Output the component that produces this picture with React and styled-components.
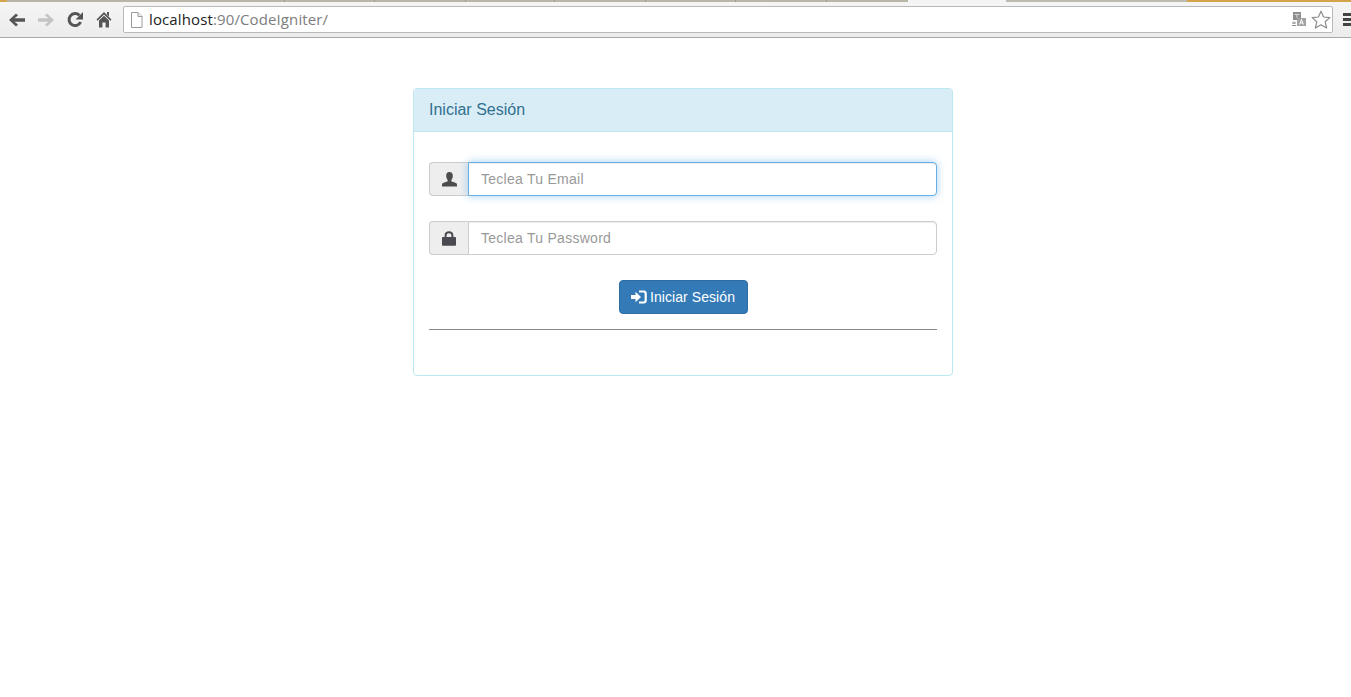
import React from "react";
import styled, { createGlobalStyle } from "styled-components";

const GlobalStyle = createGlobalStyle`
  html, body {
    margin: 0;
    padding: 0;
    background: #fff;
    font-family: "Liberation Sans", Arial, sans-serif;
  }
  * { box-sizing: border-box; }
`;

const Page = styled.div`
  width: 1351px;
  height: 697px;
  overflow: hidden;
  background: #fff;
`;

const TabStrip = styled.div`
  display: flex;
  height: 2px;
  background: #f2f2f2;
`;

const TabPiece = styled.div`
  width: ${(p) => p.$w}px;
  flex: none;
  background: ${(p) => p.$bg};
  border-right: ${(p) => (p.$sep ? "1px solid #9a9a8e" : "none")};
`;

const Toolbar = styled.div`
  display: flex;
  align-items: center;
  height: 36px;
  padding: 0 0 0 8px;
  background: linear-gradient(#f5f5f5, #ececec);
  border-bottom: 1px solid #a8a8a8;
`;

const NavButton = styled.button`
  width: 29px;
  height: 24px;
  flex: none;
  padding: 0 0 0 ${(p) => p.$inset || 0}px;
  border: 0;
  background: none;
  display: flex;
  align-items: center;
  justify-content: flex-start;
  svg { display: block; }
`;

const AddressBar = styled.div`
  display: flex;
  align-items: center;
  width: 1210px;
  height: 27px;
  margin-left: -1px;
  padding: 0 1px 0 6px;
  background: #fff;
  border: 1px solid #b9b9b9;
  border-radius: 2px;
  flex: none;
`;

const Url = styled.span`
  margin: -1px 0 0 6px;
  font-family: "Open Sans", "Liberation Sans", sans-serif;
  font-size: 15px;
  letter-spacing: 0.12px;
  color: #222;
  flex: 1;
`;

const UrlRest = styled.span`
  color: #7d7d7d;
`;

const AddressAction = styled.span`
  display: flex;
  margin-left: ${(p) => p.$gap || 0}px;
`;

const MenuButton = styled.div`
  margin-left: 10px;
  display: grid;
  gap: 2px;
  width: 10px;
  flex: none;
  span {
    height: 3px;
    background: #444;
  }
`;

const Main = styled.main`
  display: flex;
  justify-content: center;
  padding-top: 50px;
`;

const Panel = styled.section`
  width: 540px;
  height: 288px;
  margin-left: 15px;
  background: #fff;
  border: 1px solid #bce8f1;
  border-radius: 4px;
`;

const PanelHeading = styled.h3`
  margin: 0;
  height: 43px;
  padding: 0 15px;
  display: flex;
  align-items: center;
  font-size: 16px;
  font-weight: 400;
  color: #31708f;
  background: #d9edf7;
  border-bottom: 1px solid #bce8f1;
  border-radius: 3px 3px 0 0;
`;

const PanelBody = styled.form`
  padding: 30px 15px 0;
  display: flex;
  flex-direction: column;
`;

const InputGroup = styled.div`
  display: flex;
  height: 34px;
  margin-bottom: 25px;
`;

const Addon = styled.span`
  width: 39px;
  flex: none;
  display: flex;
  align-items: center;
  justify-content: center;
  background: #eee;
  border: 1px solid #ccc;
  border-right: 0;
  border-radius: 4px 0 0 4px;
`;

const Field = styled.input`
  flex: 1;
  min-width: 0;
  height: 34px;
  padding: 6px 12px;
  font: 14px "Liberation Sans", Arial, sans-serif;
  letter-spacing: 0.27px;
  color: #555;
  background: #fff;
  border: 1px solid ${(p) => (p.$focused ? "#66afe9" : "#ccc")};
  border-radius: 0 4px 4px 0;
  outline: 0;
  box-shadow: ${(p) =>
    p.$focused
      ? "inset 0 1px 1px rgba(0,0,0,.075), 0 0 8px rgba(102,175,233,.6)"
      : "inset 0 1px 1px rgba(0,0,0,.075)"};
  &::placeholder { color: #999; opacity: 1; }
`;

const Submit = styled.button`
  align-self: center;
  display: flex;
  align-items: center;
  gap: 3px;
  height: 34px;
  margin-left: 1px;
  padding: 0 12px 0 11px;
  font: 14px "Liberation Sans", Arial, sans-serif;
  letter-spacing: 0.07px;
  color: #fff;
  background: #337ab7;
  border: 1px solid #2e6da4;
  border-radius: 4px;
`;

const Divider = styled.hr`
  width: 100%;
  margin: 15px 0 0;
  border: 0;
  border-top: 1px solid #8a8a8a;
`;

const BackIcon = ({ color = "#555" }) => (
  <svg width="18" height="16" viewBox="0 0 18 16">
    <path d="M1 8 L8 1.5 L10 3.5 L6.5 6.3 H17 V9.7 H6.5 L10 12.5 L8 14.5 Z" fill={color} />
  </svg>
);

const ForwardIcon = ({ color = "#c4c4c4" }) => (
  <svg width="18" height="16" viewBox="0 0 18 16">
    <path d="M17 8 L10 1.5 L8 3.5 L11.5 6.3 H1 V9.7 H11.5 L8 12.5 L10 14.5 Z" fill={color} />
  </svg>
);

const ReloadIcon = () => (
  <svg width="17" height="17" viewBox="0 0 17 17">
    <path d="M13.6 11 A6 6 0 1 1 12.4 4.4" fill="none" stroke="#555" strokeWidth="3" />
    <path d="M16 1 V8.5 H8.5 Z" fill="#555" />
  </svg>
);

const HomeIcon = () => (
  <svg width="16" height="17" viewBox="0 0 16 17">
    <path d="M8 1 L15.5 8.5 L14.3 9.7 L8 3.6 L1.7 9.7 L.5 8.5 Z M11 1 H13 V5.5 L11 3.5 Z" fill="#555" />
    <path d="M3 9.4 L8 4.8 L13 9.4 V16.5 H9.6 V11.5 H6.4 V16.5 H3 Z" fill="#555" />
  </svg>
);

const PageIcon = () => (
  <svg width="13" height="16" viewBox="0 0 13 16">
    <path d="M1.5 .5 H8 L12 4.5 V15.5 H1.5 Z" fill="#fff" stroke="#9a9a9a" />
    <path d="M8 .5 V4.5 H12" fill="#eee" stroke="#9a9a9a" />
  </svg>
);

const TranslateIcon = () => (
  <svg width="14" height="15" viewBox="0 0 14 15">
    <rect x="1" y="0" width="8" height="8" fill="#8e8e8e" />
    <rect x="2.5" y="2" width="5" height="1" fill="#d8d8d8" />
    <rect x="4.5" y="3" width="1" height="3" fill="#d8d8d8" />
    <rect x="5" y="6" width="9" height="8" fill="#a2a2a2" />
    <path d="M7.6 12.5 L9.5 7.5 L11.4 12.5 M8.3 11 H10.7" fill="none" stroke="#fff" strokeWidth="1" />
    <path d="M0 11 H4 M2 9.5 V12 M0 13.5 H4" stroke="#8e8e8e" strokeWidth="1" />
  </svg>
);

const StarIcon = () => (
  <svg width="20" height="19" viewBox="0 0 20 19">
    <path
      d="M10 1.2 L12.6 7 L18.9 7.6 L14.2 11.8 L15.6 18 L10 14.8 L4.4 18 L5.8 11.8 L1.1 7.6 L7.4 7 Z"
      fill="#fff"
      stroke="#8c8c8c"
      strokeWidth="1.2"
      strokeLinejoin="round"
    />
  </svg>
);

// glyphicon-user
const UserIcon = () => (
  <svg width="15" height="15" viewBox="0 0 15 15">
    <path
      d="M7.5 0 C9.8 0 10.8 1.7 10.8 3.8 C10.8 5.8 10.1 7.3 9.3 8.2 V9.2 L13.9 11 C14.6 11.3 15 11.8 15 12.6 V14.5 H0 V12.6 C0 11.8 .4 11.3 1.1 11 L5.7 9.2 V8.2 C4.9 7.3 4.2 5.8 4.2 3.8 C4.2 1.7 5.2 0 7.5 0 Z"
      fill="#4d4d4d"
    />
  </svg>
);

// glyphicon-lock
const LockIcon = () => (
  <svg width="14" height="15" viewBox="0 0 14 15">
    <path
      d="M2.6 6 V4.4 C2.6 1.6 4.4 .3 7 .3 C9.6 .3 11.4 1.6 11.4 4.4 V6 H13 C13.6 6 14 6.4 14 7 V13.8 C14 14.4 13.6 14.8 13 14.8 H1 C.4 14.8 0 14.4 0 13.8 V7 C0 6.4 .4 6 1 6 Z M4.6 6 H9.4 V4.4 C9.4 3 8.4 2.3 7 2.3 C5.6 2.3 4.6 3 4.6 4.4 Z"
      fill="#4a4a50"
      fillRule="evenodd"
    />
  </svg>
);

// glyphicon-log-in
const LogInIcon = () => (
  <svg width="16" height="14" viewBox="0 0 16 14">
    <path d="M0 5 H4.5 V1.8 L10 7 L4.5 12.2 V9 H0 Z" fill="#fff" />
    <path
      d="M8 .5 H13 C14.6 .5 15.8 1.7 15.8 3.3 V10.7 C15.8 12.3 14.6 13.5 13 13.5 H8 V11.4 H12.4 C13.1 11.4 13.6 10.9 13.6 10.2 V3.8 C13.6 3.1 13.1 2.6 12.4 2.6 H8 Z"
      fill="#fff"
    />
  </svg>
);

const tabPieces = [
  { w: 7, bg: "#d4a44a" },
  { w: 278, bg: "#b9b6a8", sep: true },
  { w: 90, bg: "#b9b6a8", sep: true },
  { w: 91, bg: "#b9b6a8", sep: true },
  { w: 89, bg: "#b9b6a8", sep: true },
  { w: 91, bg: "#b9b6a8", sep: true },
  { w: 90, bg: "#b9b6a8", sep: true },
  { w: 91, bg: "#b9b6a8", sep: true },
  { w: 81, bg: "#b9b6a8" },
  { w: 98, bg: "#f4f4f4" },
  { w: 181, bg: "#bdbab0" },
  { w: 164, bg: "#d4a44a" },
];

export default function App() {
  return (
    <Page>
      <GlobalStyle />
      <TabStrip>
        {tabPieces.map((t, i) => (
          <TabPiece key={i} $w={t.w} $bg={t.bg} $sep={t.sep} />
        ))}
      </TabStrip>
      <Toolbar>
        <NavButton><BackIcon /></NavButton>
        <NavButton><ForwardIcon /></NavButton>
        <NavButton $inset={1}><ReloadIcon /></NavButton>
        <NavButton $inset={1}><HomeIcon /></NavButton>
        <AddressBar>
          <PageIcon />
          <Url>
            localhost<UrlRest>:90/CodeIgniter/</UrlRest>
          </Url>
          <AddressAction><TranslateIcon /></AddressAction>
          <AddressAction $gap={5}><StarIcon /></AddressAction>
        </AddressBar>
        <MenuButton><span /><span /><span /></MenuButton>
      </Toolbar>
      <Main>
        <Panel>
          <PanelHeading>Iniciar Sesión</PanelHeading>
          <PanelBody onSubmit={(e) => e.preventDefault()}>
            <InputGroup>
              <Addon><UserIcon /></Addon>
              <Field $focused placeholder="Teclea Tu Email" />
            </InputGroup>
            <InputGroup>
              <Addon><LockIcon /></Addon>
              <Field type="password" placeholder="Teclea Tu Password" />
            </InputGroup>
            <Submit type="submit"><LogInIcon />Iniciar Sesión</Submit>
            <Divider />
          </PanelBody>
        </Panel>
      </Main>
    </Page>
  );
}
